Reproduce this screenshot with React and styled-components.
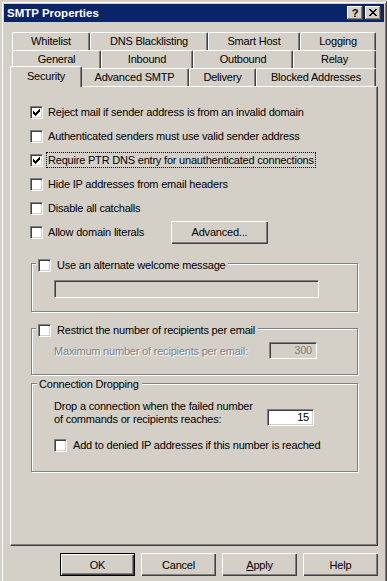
import styled, { createGlobalStyle } from "styled-components";

const face = "#d4d0c8";
const shadow = "#808080";
const darkShadow = "#404040";

const GlobalStyle = createGlobalStyle`
  html, body {
    margin: 0;
    padding: 0;
    background: ${face};
  }
  body {
    font-family: "Liberation Sans", Arial, sans-serif;
    font-size: 11px;
    letter-spacing: -0.2px;
    color: #000;
  }
  * {
    box-sizing: border-box;
  }
`;

const Window = styled.div`
  width: 386px;
  height: 580px;
  margin: 1px 0 0 1px;
  border: 1px solid ${face};
  border-right-color: ${darkShadow};
  border-bottom: none;
  box-shadow: inset 1px 1px #fff, inset -1px 0 ${shadow};
  padding: 2px 2px 0 2px;
  overflow: hidden;
`;

const TitleBar = styled.div`
  height: 18px;
  background: #0a246a;
  display: flex;
  align-items: center;
  padding: 0 3px 0 3px;
`;

const Title = styled.span`
  color: #fff;
  font-weight: bold;
  font-size: 11.5px;
  letter-spacing: 0;
`;

const CaptionButtons = styled.div`
  margin-left: auto;
  display: flex;
  gap: 2px;
`;

const CaptionButton = styled.div`
  width: 16px;
  height: 14px;
  background: ${face};
  box-shadow: inset -1px -1px ${darkShadow}, inset 1px 1px #fff,
    inset -2px -2px ${shadow};
  display: flex;
  align-items: center;
  justify-content: center;
  font-weight: bold;
  font-size: 11px;
  line-height: 12px;
  padding-bottom: 1px;
`;

const DialogBody = styled.div`
  padding: 10px 6px 0 6px;
`;

const TabStrip = styled.div`
  padding: 0 2px;
  display: flex;
  flex-direction: column;
`;

const TabRow = styled.div`
  display: flex;
  height: 18px;
`;

const Tab = styled.div`
  flex: none;
  width: ${(p) => (p.$active ? p.$w + 4 : p.$w)}px;
  height: ${(p) => (p.$active ? 21 : 18)}px;
  margin: ${(p) => (p.$active ? "-2px -2px 0 -2px" : "0")};
  position: ${(p) => (p.$active ? "relative" : "static")};
  z-index: ${(p) => (p.$active ? 2 : "auto")};
  background: ${face};
  border-top: 1px solid #fff;
  border-left: 1px solid #fff;
  border-right: 1px solid ${darkShadow};
  box-shadow: inset -1px 0 ${shadow};
  border-radius: 2px 2px 0 0;
  text-align: center;
  line-height: ${(p) => (p.$active ? 14 : 16)}px;
  padding-top: ${(p) => (p.$active ? 2 : 0)}px;
  white-space: nowrap;
`;

const Panel = styled.div`
  height: 460px;
  border: 1px solid;
  border-color: #fff ${darkShadow} ${darkShadow} #fff;
  box-shadow: inset -1px -1px ${shadow};
  padding: 13px 0 0 19px;
`;

const CheckRow = styled.div`
  display: flex;
  align-items: center;
  height: ${(p) => p.$h || 24}px;
  gap: ${(p) => p.$gap || 5}px;
  margin: ${(p) => p.$m || "0"};
`;

const Box = styled.span`
  flex: none;
  width: 13px;
  height: 13px;
  background: #fff;
  border: 1px solid;
  border-color: ${shadow} #fff #fff ${shadow};
  box-shadow: inset 1px 1px ${darkShadow}, inset -1px -1px ${face};
  display: flex;
  align-items: center;
  justify-content: center;
`;

const Label = styled.span`
  line-height: 14px;
  white-space: nowrap;
  width: ${(p) => (p.$w ? `${p.$w}px` : "auto")};
  outline: ${(p) => (p.$focus ? "1px dotted #000" : "none")};
  padding: ${(p) => (p.$focus ? "0 1px 0 0" : "0")};
  margin-left: ${(p) => (p.$focus ? "-1px" : "0")};
  padding-left: ${(p) => (p.$focus ? "1px" : "0")};
`;

const Button = styled.button`
  flex: none;
  width: ${(p) => p.$w || 75}px;
  height: 23px;
  padding: 0;
  font: inherit;
  letter-spacing: inherit;
  color: #000;
  background: ${face};
  border: ${(p) => (p.$default ? "1px solid #000" : "none")};
  box-shadow: inset 1px 1px #fff, inset -1px -1px ${darkShadow},
    inset -2px -2px ${shadow};
  text-align: center;
`;

const GroupBox = styled.div`
  width: 327px;
  margin: ${(p) => p.$mt}px 0 0 1px;
  border: 1px solid ${shadow};
  box-shadow: inset 1px 1px #fff, 1px 1px #fff;
  padding-bottom: ${(p) => p.$pb}px;
`;

const Legend = styled.div`
  display: flex;
  align-items: center;
  gap: 6px;
  width: fit-content;
  height: 14px;
  line-height: 14px;
  margin: ${(p) => (p.$plain ? "-7px 0 0 5px" : "-6px 0 0 4px")};
  padding: 0 3px 0 2px;
  background: ${face};
  white-space: nowrap;
`;

const Field = styled.div`
  flex: none;
  width: ${(p) => p.$w}px;
  height: ${(p) => p.$h || 17}px;
  margin: ${(p) => p.$m || "0"};
  background: ${(p) => (p.$disabled ? face : "#fff")};
  border: 1px solid;
  border-color: ${shadow} #fff #fff ${shadow};
  box-shadow: inset 1px 1px ${darkShadow}, inset -1px -1px ${face};
  text-align: right;
  padding: 0 4px 0 2px;
  line-height: 14px;
  color: ${(p) => (p.$disabled ? shadow : "#000")};
`;

const FieldRow = styled.div`
  display: flex;
  align-items: ${(p) => p.$align || "center"};
  margin: ${(p) => p.$m};
`;

const Muted = styled.span`
  width: ${(p) => p.$w}px;
  color: ${shadow};
  text-shadow: 1px 1px #fff;
  white-space: nowrap;
`;

const Text = styled.div`
  width: ${(p) => p.$w}px;
  line-height: 13px;
`;

const ButtonRow = styled.div`
  display: flex;
  justify-content: flex-end;
  gap: 6px;
  margin-top: 7px;
`;

function Check() {
  return (
    <svg width="7" height="7" viewBox="0 0 7 7" shapeRendering="crispEdges">
      <path
        d="M6 0h1v3h-1v1h-1v1h-1v1h-1v1h-1v-1h-1v-1h-1v-3h1v1h1v1h1v-1h1v-1h1z"
        fill="#000"
      />
    </svg>
  );
}

function Checkbox({ checked }) {
  return <Box>{checked && <Check />}</Box>;
}

function CloseGlyph() {
  return (
    <svg width="8" height="7" viewBox="0 0 8 7" shapeRendering="crispEdges">
      <path
        d="M0 0h2v1h1v1h2v-1h1v-1h2v1h-1v1h-1v1h-1v1h1v1h1v1h1v1h-2v-1h-1v-1h-2v1h-1v1h-2v-1h1v-1h1v-1h1v-1h-1v-1h-1v-1h-1z"
        fill="#000"
      />
    </svg>
  );
}

const tabRows = [
  [
    ["Whitelist", 78],
    ["DNS Blacklisting", 118],
    ["Smart Host", 92],
    ["Logging", 76],
  ],
  [
    ["General", 89],
    ["Inbound", 92],
    ["Outbound", 100],
    ["Relay", 83],
  ],
  [
    ["Security", 68, true],
    ["Advanced SMTP", 109],
    ["Delivery", 67],
    ["Blocked Addresses", 120],
  ],
];

const options = [
  ["Reject mail if sender address is from an invalid domain", true],
  ["Authenticated senders must use valid sender address", false],
  ["Require PTR DNS entry for unauthenticated connections", true, true],
  ["Hide IP addresses from email headers", false],
  ["Disable all catchalls", false],
];

export default function App() {
  return (
    <>
      <GlobalStyle />
      <Window>
        <TitleBar>
          <Title>SMTP Properties</Title>
          <CaptionButtons>
            <CaptionButton>?</CaptionButton>
            <CaptionButton>
              <CloseGlyph />
            </CaptionButton>
          </CaptionButtons>
        </TitleBar>
        <DialogBody>
          <TabStrip>
            {tabRows.map((row, i) => (
              <TabRow key={i}>
                {row.map(([name, w, active]) => (
                  <Tab key={name} $w={w} $active={active}>
                    {name}
                  </Tab>
                ))}
              </TabRow>
            ))}
          </TabStrip>
          <Panel>
            {options.map(([text, checked, focus]) => (
              <CheckRow key={text}>
                <Checkbox checked={checked} />
                <Label $focus={focus}>{text}</Label>
              </CheckRow>
            ))}
            <CheckRow>
              <Checkbox />
              <Label $w={118}>Allow domain literals</Label>
              <Button $w={97}>Advanced...</Button>
            </CheckRow>

            <GroupBox $mt={19} $pb={13}>
              <Legend>
                <Checkbox />
                <Label>Use an alternate welcome message</Label>
              </Legend>
              <Field $w={265} $h={18} $m="8px 0 0 22px" $disabled />
            </GroupBox>

            <GroupBox $mt={16} $pb={15}>
              <Legend>
                <Checkbox />
                <Label>Restrict the number of recipients per email</Label>
              </Legend>
              <FieldRow $m="5px 0 0 22px">
                <Muted $w={215}>Maximum number of recipients per email:</Muted>
                <Field $w={48} $disabled>
                  300
                </Field>
              </FieldRow>
            </GroupBox>

            <GroupBox $mt={8} $pb={19}>
              <Legend $plain>Connection Dropping</Legend>
              <FieldRow $m="9px 0 0 22px" $align="flex-end">
                <Text $w={213}>
                  Drop a connection when the failed number
                  <br />
                  of commands or recipients reaches:
                </Text>
                <Field $w={47}>15</Field>
              </FieldRow>
              <CheckRow $h={14} $gap={6} $m="12px 0 0 22px">
                <Checkbox />
                <Label>Add to denied IP addresses if this number is reached</Label>
              </CheckRow>
            </GroupBox>
          </Panel>
          <ButtonRow>
            <Button $default>OK</Button>
            <Button>Cancel</Button>
            <Button>
              <u>A</u>pply
            </Button>
            <Button>Help</Button>
          </ButtonRow>
        </DialogBody>
      </Window>
    </>
  );
}
